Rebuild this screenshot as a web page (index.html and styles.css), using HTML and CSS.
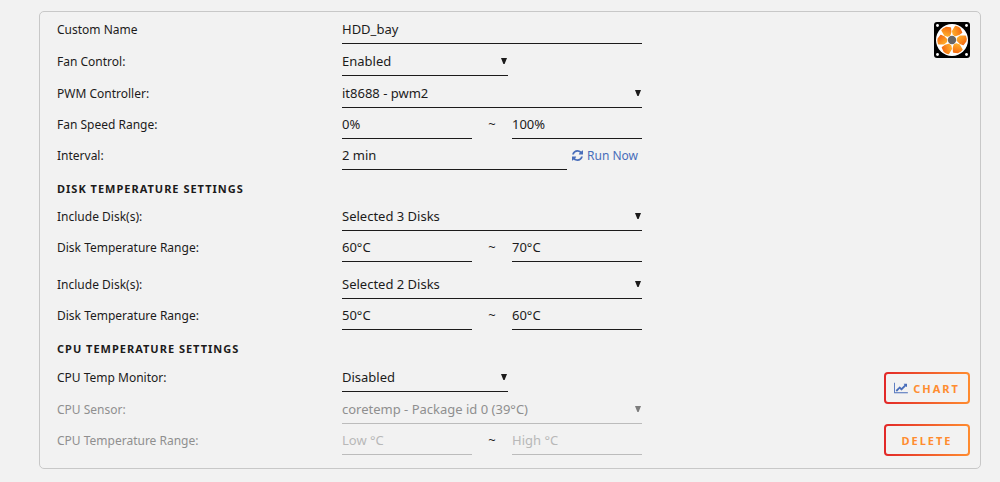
FILE: index.html
```html
<!doctype html>
<html lang="en">
  <head>
    <meta charset="UTF-8" />
    <meta name="viewport" content="width=device-width, initial-scale=1.0" />
    <title>Fan Auto Control</title>
    <link rel="stylesheet" href="styles.css">
  </head>
  <body>
    <form class="fan-card">
      <div class="settings">
        <div class="row">
          <label for="custom-name">Custom Name</label>
          <div class="field">
            <input type="text" id="custom-name" value="HDD_bay" />
          </div>
        </div>
        <div class="row row-select">
          <label for="fan-control">Fan Control:</label>
          <div class="field">
            <div class="select short">
              <select id="fan-control">
                <option>Disabled</option>
                <option selected>Enabled</option>
              </select>
            </div>
          </div>
        </div>
        <div class="row row-select">
          <label for="pwm">PWM Controller:</label>
          <div class="field">
            <div class="select">
              <select id="pwm">
                <option>it8688 - pwm2</option>
              </select>
            </div>
          </div>
        </div>
        <div class="row">
          <label for="speed-min">Fan Speed Range:</label>
          <div class="field">
            <input type="text" id="speed-min" value="0%" />
            <span class="tilde">~</span>
            <input type="text" aria-label="Maximum fan speed" value="100%" />
          </div>
        </div>
        <div class="row">
          <label for="interval">Interval:</label>
          <div class="field">
            <input type="text" id="interval" value="2 min" />
            <a class="run-now" href="#">
              <svg viewBox="0 0 1536 1792" width="11" height="13" aria-hidden="true">
                <path d="M1511 1056q0 5-1 7-64 268-268 434.5t-478 166.5q-146 0-282.5-55t-243.5-157l-129 129q-19 19-45 19t-45-19-19-45v-448q0-26 19-45t45-19h448q26 0 45 19t19 45-19 45l-137 137q71 66 161 102t187 36q134 0 250-65t186-179q11-17 53-117 8-23 30-23h192q13 0 22.5 9.5t9.5 22.5zm25-800v448q0 26-19 45t-45 19h-448q-26 0-45-19t-19-45 19-45l138-138q-148-137-349-137-134 0-250 65t-186 179q-11 17-53 117-8 23-30 23h-199q-13 0-22.5-9.5t-9.5-22.5v-7q65-268 270-434.5t480-166.5q146 0 284 55.5t245 156.5l130-129q19-19 45-19t45 19 19 45z" />
              </svg>
              Run Now
            </a>
          </div>
        </div>

        <h2>Disk Temperature Settings</h2>
        <div class="row">
          <label for="disks-1">Include Disk(s):</label>
          <div class="field">
            <div class="select">
              <select id="disks-1">
                <option>Selected 3 Disks</option>
              </select>
            </div>
          </div>
        </div>
        <div class="row">
          <label for="disk-low-1">Disk Temperature Range:</label>
          <div class="field">
            <input type="text" id="disk-low-1" value="60°C" />
            <span class="tilde">~</span>
            <input type="text" aria-label="High disk temperature" value="70°C" />
          </div>
        </div>
        <div class="row group-start">
          <label for="disks-2">Include Disk(s):</label>
          <div class="field">
            <div class="select">
              <select id="disks-2">
                <option>Selected 2 Disks</option>
              </select>
            </div>
          </div>
        </div>
        <div class="row">
          <label for="disk-low-2">Disk Temperature Range:</label>
          <div class="field">
            <input type="text" id="disk-low-2" value="50°C" />
            <span class="tilde">~</span>
            <input type="text" aria-label="High disk temperature" value="60°C" />
          </div>
        </div>

        <h2>CPU Temperature Settings</h2>
        <div class="row row-select">
          <label for="cpu-monitor">CPU Temp Monitor:</label>
          <div class="field">
            <div class="select short">
              <select id="cpu-monitor">
                <option>Disabled</option>
                <option>Enabled</option>
              </select>
            </div>
          </div>
        </div>
        <div class="row row-select off">
          <label for="cpu-sensor">CPU Sensor:</label>
          <div class="field">
            <div class="select">
              <select id="cpu-sensor" disabled>
                <option>coretemp - Package id 0 (39°C)</option>
              </select>
            </div>
          </div>
        </div>
        <div class="row off">
          <label for="cpu-low">CPU Temperature Range:</label>
          <div class="field">
            <input type="text" id="cpu-low" placeholder="Low °C" disabled />
            <span class="tilde">~</span>
            <input type="text" aria-label="High CPU temperature" placeholder="High °C" disabled />
          </div>
        </div>
      </div>

      <div class="side">
        <svg class="fan" viewBox="0 0 36 36" width="36" height="36" role="img" aria-label="Fan">
          <defs>
            <linearGradient id="blade-fill" x1="0" y1="0" x2="1" y2="1">
              <stop offset="0" stop-color="#ffb52e" />
              <stop offset="1" stop-color="#f4600c" />
            </linearGradient>
            <path id="blade" d="M23.6 16.2 L26 14.2 L31.4 14.2 Q32.4 16.4 31.8 19 L29.2 22.6 Q25.6 21.6 23.4 18.6 Z" fill="url(#blade-fill)" stroke="url(#blade-fill)" stroke-width="1.4" stroke-linejoin="round" />
          </defs>
          <rect width="36" height="36" rx="3" fill="#000" />
          <g fill="#fff">
            <circle cx="3.5" cy="3.5" r="1.4" />
            <circle cx="32.5" cy="3.5" r="1.4" />
            <circle cx="3.5" cy="32.5" r="1.4" />
            <circle cx="32.5" cy="32.5" r="1.4" />
            <circle cx="18" cy="18" r="16" />
          </g>
          <use href="#blade" />
          <use href="#blade" transform="rotate(60 18 18)" />
          <use href="#blade" transform="rotate(120 18 18)" />
          <use href="#blade" transform="rotate(180 18 18)" />
          <use href="#blade" transform="rotate(240 18 18)" />
          <use href="#blade" transform="rotate(300 18 18)" />
          <circle cx="18" cy="18" r="4.2" fill="#666" />
        </svg>
        <div class="actions">
          <button type="button" class="btn">
            <svg viewBox="0 0 2048 1792" width="14" height="12" aria-hidden="true">
              <path d="M2048 1536v128h-2048v-1536h128v1408h1920zm-128-1248v435q0 21-19.5 29.5t-35.5-7.5l-121-121-633 633q-10 10-23 10t-23-10l-233-233-416 416-192-192 585-585q10-10 23-10t23 10l233 233 464-464-121-121q-16-16-7.5-35.5t29.5-19.5h435q14 0 23 9t9 23z" />
            </svg>
            Chart
          </button>
          <button type="button" class="btn">Delete</button>
        </div>
      </div>
    </form>
  </body>
</html>
```
FILE: styles.css
```css
* {
  box-sizing: border-box;
}

body {
  margin: 0;
  background-color: #f2f2f2;
  color: #1c1b1b;
  font-family: "Noto Sans", "Open Sans", sans-serif;
  font-size: 12px;
}

.fan-card {
  display: flex;
  justify-content: space-between;
  margin: 11px 19px 13px 39px;
  padding: 1px 10px 12px 17px;
  border: 1px solid #c8c8c8;
  border-radius: 5px;
}

.settings {
  flex: 0 1 585px;
  padding-bottom: 1px;
}

.row {
  display: flex;
  align-items: center;
  padding-top: 1px;
}

.row-select {
  padding-top: 2px;
}

.group-start {
  margin-top: 6px;
}

.row label {
  flex: 0 0 285px;
}

.field {
  display: flex;
  flex: 1;
  align-items: center;
  min-width: 0;
}

h2 {
  margin: 0;
  padding: 10px 0 2px;
  font-size: 11px;
  font-weight: bold;
  line-height: 18px;
  letter-spacing: 1px;
  text-transform: uppercase;
}

input,
select {
  flex: 1;
  width: 100%;
  min-width: 0;
  height: 30px;
  padding: 0;
  border: none;
  border-bottom: 1px solid #1c1b1b;
  border-radius: 0;
  background: transparent;
  color: inherit;
  font: inherit;
  font-size: 13px;
  appearance: none;
}

.select {
  position: relative;
  display: flex;
  flex: 1;
}

.select.short {
  flex: 0 1 166px;
}

/* dropdown arrow */
.select::after {
  content: "";
  position: absolute;
  top: 12px;
  right: 1px;
  width: 6px;
  height: 6px;
  background-color: #1c1b1b;
  clip-path: polygon(0 0, 100% 0, 60% 100%, 40% 100%);
  pointer-events: none;
}

.tilde {
  flex: 0 0 40px;
  font-size: 13px;
  text-align: center;
}

.run-now {
  display: flex;
  align-items: center;
  gap: 4px;
  flex: 0 0 75px;
  padding-left: 5px;
  color: #486dba;
  text-decoration: none;
  white-space: nowrap;
}

.run-now svg,
.btn svg {
  fill: #486dba;
}

/* disabled rows */
.off label,
.off select {
  color: #8f8f8f;
}

.off input,
.off select {
  border-color: #bcbcbc;
  opacity: 1;
}

.off input::placeholder {
  color: #b8b8b8;
}

.off .select::after {
  background-color: #7d7d7d;
}

.side {
  display: flex;
  flex-direction: column;
  justify-content: space-between;
  align-items: flex-end;
  padding-top: 9px;
}

.actions {
  display: flex;
  flex-direction: column;
  gap: 20px;
}

.btn {
  display: flex;
  align-items: center;
  justify-content: center;
  gap: 5px;
  width: 86px;
  height: 32px;
  padding: 0;
  border: 2px solid transparent;
  border-radius: 4px;
  background:
    linear-gradient(#f2f2f2, #f2f2f2) padding-box,
    linear-gradient(90deg, #e22828, #ff8c2f) border-box;
  color: #ff8c2f;
  font-family: inherit;
  font-size: 11px;
  font-weight: bold;
  letter-spacing: 2px;
  text-transform: uppercase;
  cursor: pointer;
}
```
